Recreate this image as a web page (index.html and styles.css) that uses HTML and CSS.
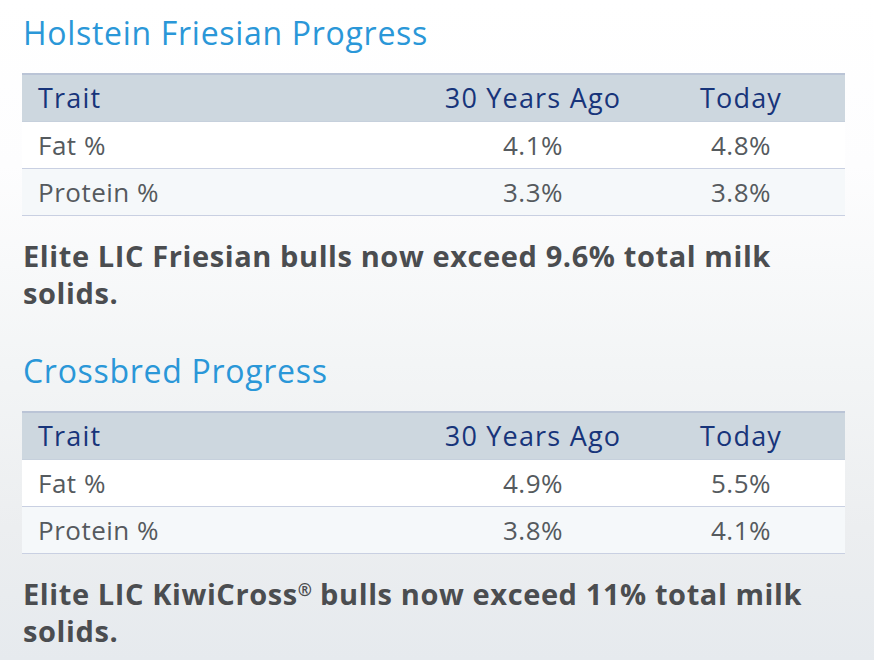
FILE: index.html
```html
<!DOCTYPE html>
<html lang="en">
<head>
<meta charset="utf-8">
<title>Progress</title>
<link rel="stylesheet" href="styles.css">
</head>
<body>
<main class="page">
  <section class="block">
    <h2 class="title">Holstein Friesian Progress</h2>
    <div class="table">
      <div class="row head">
        <div class="cell trait">Trait</div>
        <div class="cell num">30 Years Ago</div>
        <div class="cell num">Today</div>
      </div>
      <div class="row">
        <div class="cell trait">Fat %</div>
        <div class="cell num">4.1%</div>
        <div class="cell num">4.8%</div>
      </div>
      <div class="row alt">
        <div class="cell trait">Protein %</div>
        <div class="cell num">3.3%</div>
        <div class="cell num">3.8%</div>
      </div>
    </div>
    <p class="note">Elite LIC Friesian bulls now exceed 9.6% total milk solids.</p>
  </section>
  <section class="block second">
    <h2 class="title">Crossbred Progress</h2>
    <div class="table">
      <div class="row head">
        <div class="cell trait">Trait</div>
        <div class="cell num">30 Years Ago</div>
        <div class="cell num">Today</div>
      </div>
      <div class="row">
        <div class="cell trait">Fat %</div>
        <div class="cell num">4.9%</div>
        <div class="cell num">5.5%</div>
      </div>
      <div class="row alt">
        <div class="cell trait">Protein %</div>
        <div class="cell num">3.8%</div>
        <div class="cell num">4.1%</div>
      </div>
    </div>
    <p class="note">Elite LIC KiwiCross<sup class="reg">®</sup> bulls now exceed 11% total milk solids.</p>
  </section>
</main>
</body>
</html>
```

FILE: styles.css
```css
html, body {
  margin: 0;
  padding: 0;
}
body {
  width: 874px;
  height: 660px;
  overflow: hidden;
  font-family: "Open Sans", "Liberation Sans", sans-serif;
  background: linear-gradient(to bottom, #ffffff 0%, #fdfdfe 25%, #f3f5f6 55%, #eceef0 80%, #e6eaee 100%);
}
.page {
  padding: 14px 29px 0 22px;
  display: flex;
  flex-direction: column;
}
.block {
  display: flex;
  flex-direction: column;
}
.second {
  margin-top: 41px;
}
.title {
  margin: 0 0 0 1px;
  font-size: 32px;
  line-height: 38px;
  font-weight: 400;
  letter-spacing: 0.7px;
  color: #2a97d8;
}
.table {
  margin-top: 21px;
  display: flex;
  flex-direction: column;
}
.row {
  display: grid;
  grid-template-columns: 1fr 208px 208px;
  height: 46px;
  border-bottom: 1px solid #c9d0e2;
  background: #ffffff;
  font-size: 26px;
  line-height: 46px;
  letter-spacing: 0.5px;
  color: #555a5e;
}
.row.alt {
  background: #f5f8fa;
}
.row.head {
  height: 46px;
  border-top: 2px solid #bac4d6;
  border-bottom: 1px solid #c6d0dc;
  background: #cdd7df;
  font-size: 27px;
  letter-spacing: 1.2px;
  color: #17347a;
}
.cell.trait {
  padding-left: 16px;
}
.cell.num {
  text-align: center;
}
.note {
  margin: 21px 0 0 1px;
  font-size: 29px;
  line-height: 37px;
  font-weight: 700;
  letter-spacing: 0.6px;
  color: #4b4d50;
}
.reg {
  font-size: 17px;
  line-height: 0;
  letter-spacing: 0;
  vertical-align: 9px;
}
```
